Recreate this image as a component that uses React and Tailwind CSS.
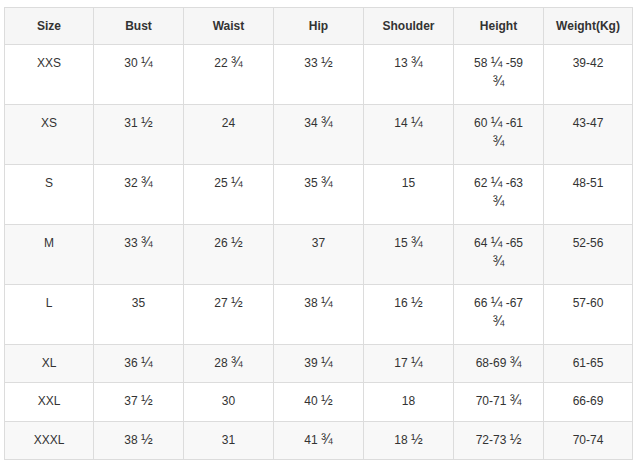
const headers = ['Size', 'Bust', 'Waist', 'Hip', 'Shoulder', 'Height', 'Weight(Kg)'];

const rows = [
  { h: 'h-[60px]', cells: ['XXS', '30 ¼', '22 ¾', '33 ½', '13 ¾', ['58 ¼ -59', '¾'], '39-42'] },
  { h: 'h-[60px]', cells: ['XS', '31 ½', '24', '34 ¾', '14 ¼', ['60 ¼ -61', '¾'], '43-47'] },
  { h: 'h-[60px]', cells: ['S', '32 ¾', '25 ¼', '35 ¾', '15', ['62 ¼ -63', '¾'], '48-51'] },
  { h: 'h-[60px]', cells: ['M', '33 ¾', '26 ½', '37', '15 ¾', ['64 ¼ -65', '¾'], '52-56'] },
  { h: 'h-[60px]', cells: ['L', '35', '27 ½', '38 ¼', '16 ½', ['66 ¼ -67', '¾'], '57-60'] },
  { h: 'h-[38px]', cells: ['XL', '36 ¼', '28 ¾', '39 ¼', '17 ¼', '68-69 ¾', '61-65'] },
  { h: 'h-[39px]', cells: ['XXL', '37 ½', '30', '40 ½', '18', '70-71 ¾', '66-69'] },
  { h: 'h-[38px]', cells: ['XXXL', '38 ½', '31', '41 ¾', '18 ½', '72-73 ½', '70-74'] },
];

const widths = ['w-[89px]', 'w-[90px]', 'w-[90px]', 'w-[90px]', 'w-[90px]', 'w-[90px]', 'w-[89px]'];

// fractions are drawn a bit larger, as in the original chart
function Text({ value }) {
  return value.split(/([¼½¾])/).map((part, i) =>
    /[¼½¾]/.test(part) ? (
      <span key={i} className="text-[14px] leading-[0]">
        {part}
      </span>
    ) : (
      part
    )
  );
}

export default function App() {
  return (
    <div className="w-[639px] h-[465px] bg-white pt-[7px] pl-[4px] font-['Liberation_Sans',Arial,sans-serif] text-[12px] text-[#333]">
      <table className="table-fixed border-collapse w-[628px]">
        <colgroup>
          {widths.map((w, i) => (
            <col key={i} className={w} />
          ))}
        </colgroup>
        <thead>
          <tr className="h-[37px] bg-[#f6f6f6]">
            {headers.map((h) => (
              <th key={h} className="border border-[#dcdcdc] font-bold text-center align-middle leading-[19px] p-0">
                {h}
              </th>
            ))}
          </tr>
        </thead>
        <tbody>
          {rows.map((row, ri) => (
            <tr key={ri} className={`${row.h} ${ri % 2 === 1 ? 'bg-[#f8f8f8]' : 'bg-white'}`}>
              {row.cells.map((c, ci) => (
                <td key={ci} className="border border-[#dcdcdc] text-center align-top pt-[9px] px-1 leading-[19px]">
                  {Array.isArray(c) ? (
                    <>
                      <Text value={c[0]} />
                      <br />
                      <Text value={c[1]} />
                    </>
                  ) : (
                    <Text value={c} />
                  )}
                </td>
              ))}
            </tr>
          ))}
        </tbody>
      </table>
    </div>
  );
}
